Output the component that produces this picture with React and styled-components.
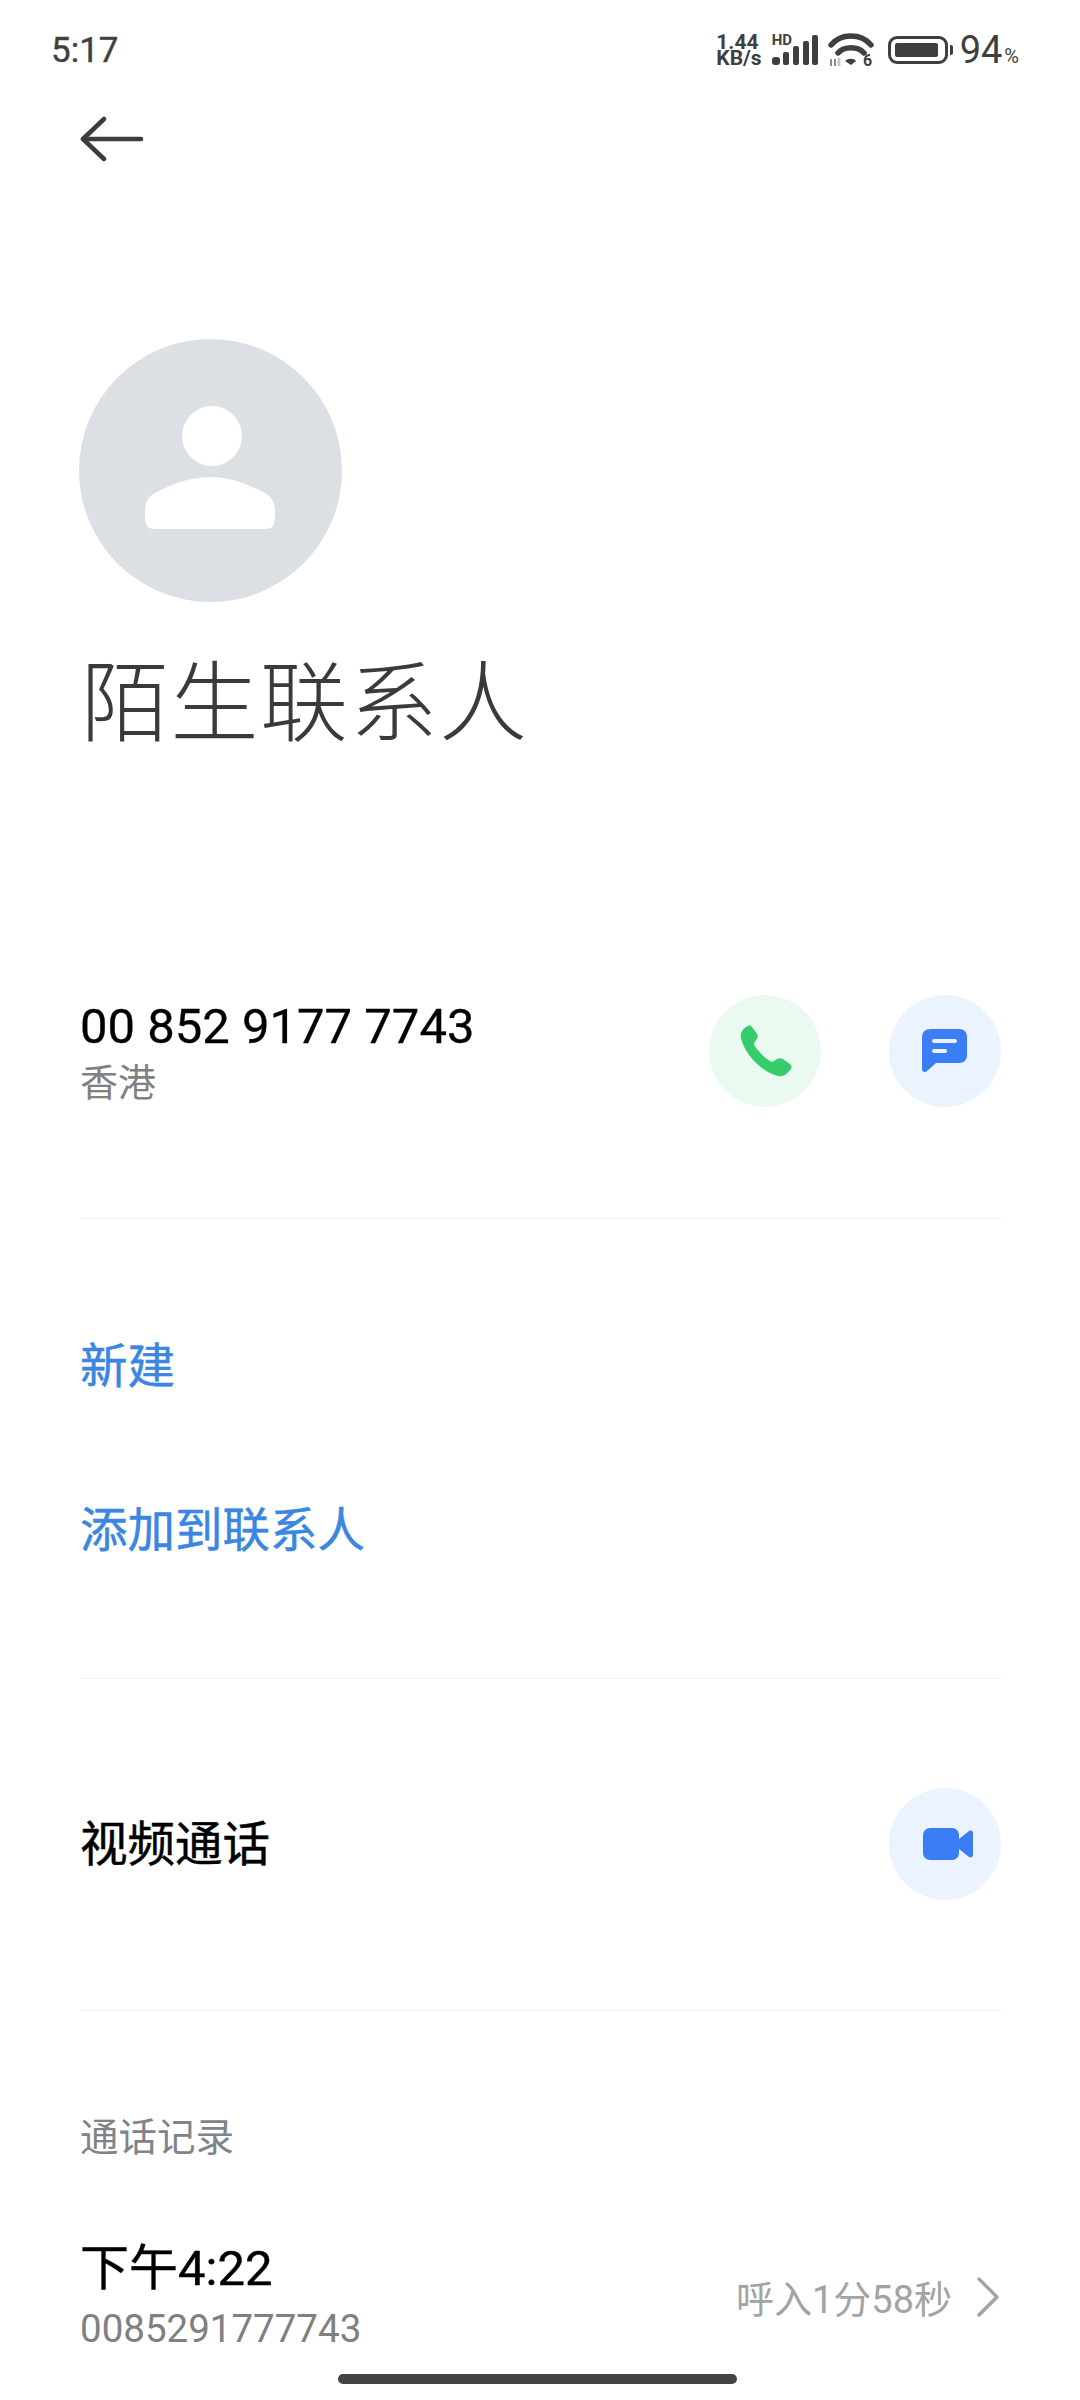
import styled, { createGlobalStyle } from 'styled-components';

const CJK = `Roboto, "Noto Sans CJK SC", sans-serif`;

const GlobalStyle = createGlobalStyle`
  html, body {
    margin: 0;
    padding: 0;
    background: #fff;
    font-family: ${CJK};
  }
`;

const App = () => {
  return (
    <StyledPage>
      <GlobalStyle />
      <StyledStatusBar>
        <StyledClock>5:17</StyledClock>
        <StyledStatusIcons>
          <StyledSpeed>
            <span>1.44</span>
            <span>KB/s</span>
          </StyledSpeed>
          <StyledSignal>
            <small>HD</small>
            <svg width='46' height='30' viewBox='0 0 46 30' fill='#3f3f3f'>
              <rect x='0' y='22' width='8' height='8' rx='3' />
              <rect x='11' y='17' width='6' height='13' rx='2' />
              <rect x='21' y='11' width='6' height='19' rx='2' />
              <rect x='31' y='6' width='6' height='24' rx='2' />
              <rect x='40' y='0' width='6' height='30' rx='2' />
            </svg>
          </StyledSignal>
          <StyledWifi width='46' height='40' viewBox='0 0 46 40' fill='none'>
            <path d='M3 12 C13 0 33 0 43 12' stroke='#3f3f3f' strokeWidth='5.5' strokeLinecap='round' />
            <path d='M10 20 C16 13 30 13 36 20' stroke='#3f3f3f' strokeWidth='5.5' strokeLinecap='round' />
            <path d='M17 28 C20 25 26 25 28 28 L23 32 Z' fill='#3f3f3f' />
            <path d='M3 33 V26 M7 26 V33' stroke='#8c8c8c' strokeWidth='2' />
            <path d='M11 33 V25' stroke='#c4c4c4' strokeWidth='3' />
            <text x='35' y='33' fontSize='16' fontWeight='700' fill='#3f3f3f' fontFamily='Roboto, sans-serif'>6</text>
          </StyledWifi>
          <StyledBattery>
            <StyledBatteryBody>
              <StyledBatteryLevel level={94} />
            </StyledBatteryBody>
            <StyledBatteryNub />
          </StyledBattery>
          <StyledPercent>
            94<small>%</small>
          </StyledPercent>
        </StyledStatusIcons>
      </StyledStatusBar>

      <StyledTopBar>
        <svg width='64' height='46' viewBox='0 0 64 46' fill='none' stroke='#3c3c3c' strokeWidth='4.5' strokeLinecap='round' strokeLinejoin='round'>
          <path d='M3 23 H61' />
          <path d='M24 3 L3 23 L24 43' />
        </svg>
      </StyledTopBar>

      <StyledHeader>
        <StyledAvatar>
          <svg width='263' height='263' viewBox='0 0 263 263' fill='#fff'>
            <circle cx='133' cy='97' r='30' />
            <path d='M66 172 C66 160 72 155 82 151 C98 143 115 138 131 138 C147 138 164 143 180 151 C190 155 196 160 196 172 V180 Q196 190 186 190 H76 Q66 190 66 180 Z' />
          </svg>
        </StyledAvatar>
        <StyledName>陌生联系人</StyledName>
      </StyledHeader>

      <StyledSection top={238} bottom={111}>
        <StyledRow>
          <StyledNumberBlock>
            <StyledPhone>00 852 9177 7743</StyledPhone>
            <StyledRegion>香港</StyledRegion>
          </StyledNumberBlock>
          <StyledActions>
            <StyledCircle tone='#ebfaf0' nudge={2}>
              <svg width='52' height='52' viewBox='0 0 52 52' fill='#35cc6b'>
                <path d='M1 13 C0 8 3 3 8 1 C10 0 11 1 12 2 L17 9 C18 11 18 13 16 15 L14 18 C14 20 15 22 17 24 C21 29 25 33 30 36 C31 37 33 37 34 36 L37 34 C39 33 41 33 43 34 L50 39 C52 41 52 43 50 45 C47 49 43 52 38 51 C22 47 5 30 1 13 Z' />
              </svg>
            </StyledCircle>
            <StyledCircle tone='#ebf3fe'>
              <svg width='46' height='44' viewBox='0 0 46 44' fill='#3a7df5'>
                <path d='M9 0 H37 C42 0 45 3 45 8 V26 C45 31 42 34 37 34 H14 L5 42 C3 44 0 43 0 40 V9 C0 3 3 0 9 0 Z' />
                <rect x='10' y='10' width='25' height='4' rx='2' fill='#ebf3fe' />
                <rect x='10' y='20' width='15' height='4' rx='2' fill='#ebf3fe' />
              </svg>
            </StyledCircle>
          </StyledActions>
        </StyledRow>
      </StyledSection>
      <StyledDivider />

      <StyledLinks>
        <StyledLink>新建</StyledLink>
        <StyledLink>添加到联系人</StyledLink>
      </StyledLinks>
      <StyledDivider />

      <StyledSection top={109} bottom={110}>
        <StyledRow>
          <StyledLabel>视频通话</StyledLabel>
          <StyledCircle tone='#ebf3fe' nudge={5}>
            <svg width='50' height='32' viewBox='0 0 50 32' fill='#3a7df5'>
              <rect x='0' y='0' width='36' height='32' rx='7' />
              <path d='M36 11 L46 3 C48 2 50 3 50 5 V27 C50 29 48 30 46 29 L36 21 Z' />
            </svg>
          </StyledCircle>
        </StyledRow>
      </StyledSection>
      <StyledDivider />

      <StyledHistory>
        <StyledHistoryTitle>通话记录</StyledHistoryTitle>
        <StyledLogRow>
          <div>
            <StyledLogTime>下午4:22</StyledLogTime>
            <StyledLogNumber>0085291777743</StyledLogNumber>
          </div>
          <StyledLogMeta>
            呼入1分58秒
            <svg width='24' height='40' viewBox='0 0 24 40' fill='none' stroke='#a3a3a3' strokeWidth='3.5' strokeLinecap='round' strokeLinejoin='round'>
              <path d='M3 2 L21 20 L3 38' />
            </svg>
          </StyledLogMeta>
        </StyledLogRow>
      </StyledHistory>

      <StyledHomeBar />
    </StyledPage>
  );
};

//styled-components
const StyledPage = styled.div`
  position: relative;
  width: 1080px;
  height: 2400px;
  overflow: hidden;
  background: #fff;
`;

const StyledStatusBar = styled.div`
  height: 100px;
  padding: 0 61px 0 51px;
  box-sizing: border-box;
  display: flex;
  align-items: center;
  justify-content: space-between;
  color: #3f3f3f;
`;

const StyledClock = styled.div`
  font-size: 35px;
  font-weight: 400;
  -webkit-text-stroke: 0.4px #3f3f3f;
`;

const StyledStatusIcons = styled.div`
  display: flex;
  align-items: center;
  gap: 10px;
`;

const StyledSpeed = styled.div`
  display: flex;
  flex-direction: column;
  font-size: 21px;
  font-weight: 700;
  line-height: 16px;
`;

const StyledSignal = styled.div`
  position: relative;
  svg {
    display: block;
  }
  small {
    position: absolute;
    left: 0;
    top: -2px;
    font-size: 15px;
    line-height: 14px;
    font-weight: 700;
  }
`;

const StyledWifi = styled.svg`
  margin-top: 6px;
`;

const StyledBattery = styled.div`
  display: flex;
  align-items: center;
  gap: 2px;
  margin-left: 4px;
`;

const StyledBatteryBody = styled.div`
  width: 60px;
  height: 28px;
  box-sizing: border-box;
  padding: 4px;
  border: 3px solid #3f3f3f;
  border-radius: 9px;
`;

const StyledBatteryLevel = styled.div`
  width: ${(p) => p.level}%;
  height: 100%;
  background: #3f3f3f;
  border-radius: 2px;
`;

const StyledBatteryNub = styled.div`
  width: 3px;
  height: 10px;
  background: #3f3f3f;
  border-radius: 0 2px 2px 0;
`;

const StyledPercent = styled.div`
  margin-left: -3px;
  font-size: 38px;
  font-weight: 400;
  small {
    font-size: 20px;
    font-weight: 400;
    margin-left: 2px;
  }
`;

const StyledTopBar = styled.div`
  height: 78px;
  padding-left: 80px;
  display: flex;
  align-items: center;
`;

const StyledHeader = styled.div`
  padding: 161px 0 0 79px;
`;

const StyledAvatar = styled.div`
  width: 263px;
  height: 263px;
  border-radius: 50%;
  background: #dcdfe4;
  svg {
    display: block;
  }
`;

const StyledName = styled.h1`
  margin: 47px 0 -2px 2px;
  font-size: 88px;
  font-weight: 300;
  line-height: 110px;
  letter-spacing: 1.5px;
  color: #3a3a3a;
`;

const StyledSection = styled.div`
  padding: ${(p) => p.top}px 79px ${(p) => p.bottom}px 80px;
`;

const StyledRow = styled.div`
  display: flex;
  align-items: center;
  justify-content: space-between;
`;

const StyledNumberBlock = styled.div`
  padding-top: 6px;
`;

const StyledPhone = styled.div`
  font-size: 49px;
  line-height: 52px;
  color: #000;
  -webkit-text-stroke: 0.3px #000;
`;

const StyledRegion = styled.div`
  margin-top: 7px;
  font-size: 38px;
  line-height: 47px;
  color: #808080;
`;

const StyledActions = styled.div`
  display: flex;
  gap: 68px;
`;

const StyledCircle = styled.div`
  width: 112px;
  height: 112px;
  border-radius: 50%;
  background: ${(p) => p.tone};
  display: flex;
  align-items: center;
  justify-content: center;
  svg {
    margin-left: ${(p) => p.nudge || 0}px;
  }
`;

const StyledDivider = styled.div`
  height: 1px;
  margin: 0 79px 0 80px;
  background: #efefef;
`;

const StyledLinks = styled.div`
  padding: 98px 80px 97px;
  display: flex;
  flex-direction: column;
  gap: 64px;
`;

const StyledLink = styled.div`
  font-size: 47.5px;
  font-weight: 400;
  line-height: 100px;
  color: #3b86e0;
  -webkit-text-stroke: 0.5px #3b86e0;
`;

const StyledLabel = styled.div`
  padding-top: 2px;
  font-size: 47.5px;
  font-weight: 400;
  line-height: 60px;
  color: #000;
  -webkit-text-stroke: 0.5px #000;
`;

const StyledHistory = styled.div`
  padding: 101px 80px 0 80px;
`;

const StyledHistoryTitle = styled.div`
  padding-top: 1px;
  font-size: 38.5px;
  line-height: 49px;
  color: #7f838c;
`;

const StyledLogRow = styled(StyledRow)`
  margin-top: 77px;
`;

const StyledLogTime = styled.div`
  font-size: 49px;
  line-height: 60px;
  color: #000;
  -webkit-text-stroke: 0.4px #000;
`;

const StyledLogNumber = styled.div`
  margin-top: 5px;
  font-size: 38.5px;
  line-height: 50px;
  color: #808080;
`;

const StyledLogMeta = styled.div`
  display: flex;
  align-items: center;
  gap: 24px;
  font-size: 38px;
  color: #a3a3a3;
`;

const StyledHomeBar = styled.div`
  position: absolute;
  left: 338px;
  bottom: 16px;
  width: 399px;
  height: 10px;
  border-radius: 5px;
  background: #444;
`;

export default App;
